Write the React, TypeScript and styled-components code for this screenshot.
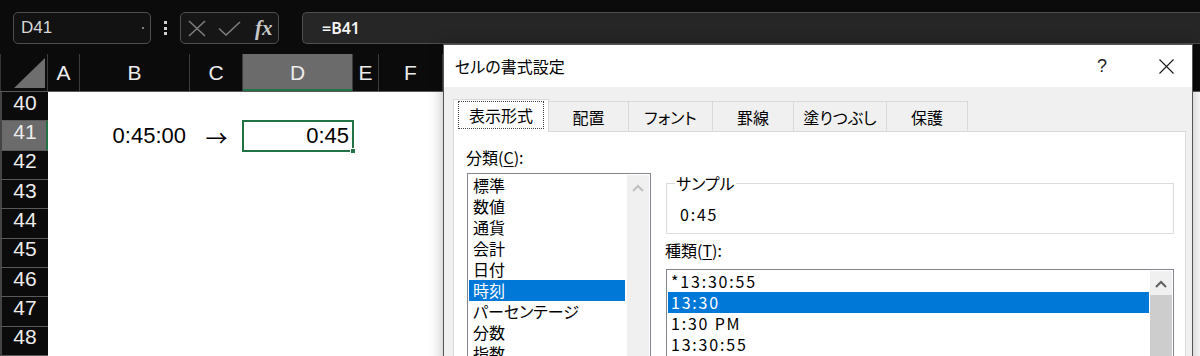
import React from "react";
import styled, { createGlobalStyle, css } from "styled-components";

const JP = `"Noto Sans CJK JP", "Noto Sans", sans-serif`;
const UI = `"Liberation Sans", Arial, sans-serif`;
const GREEN = "#217346";
const BLUE = "#0078d7";
const ROW_H = 29.33;

const GlobalStyle = createGlobalStyle`
  html, body { margin: 0; padding: 0; background: #0b0b0b; }
  * { box-sizing: border-box; }
`;

const Screen = styled.div`
  position: relative;
  width: 1200px;
  height: 356px;
  overflow: hidden;
  background: #0b0b0b;
  font-family: ${UI};
`;

/* ---------- formula bar ---------- */

const FormulaBar = styled.div`
  display: flex;
  align-items: center;
  height: 32px;
  margin-top: 12px;
  padding-left: 13px;
`;

const NameBox = styled.div`
  width: 138px;
  height: 32px;
  border: 1px solid #4e4e4e;
  border-radius: 5px;
  background: #121212;
  display: flex;
  align-items: center;
  justify-content: space-between;
  padding: 0 6px 0 7px;
  color: #d8d8d8;
  font-size: 17px;
`;

const NameDot = styled.span`
  width: 2px;
  height: 2px;
  border-radius: 1px;
  background: #a0a0a0;
`;

const Kebab = styled.div`
  width: 29px;
  display: flex;
  flex-direction: column;
  align-items: center;
  gap: 2.5px;

  span {
    width: 3px;
    height: 3px;
    background: #d0d0d0;
  }
`;

const FuncBox = styled.div`
  width: 99px;
  height: 32px;
  border: 1px solid #4e4e4e;
  border-radius: 5px;
  background: #161616;
  display: flex;
  align-items: center;
  padding-left: 7px;

  svg + svg {
    margin-left: 12px;
  }
`;

const Fx = styled.span`
  margin-left: 14px;
  font-family: "Liberation Serif", "Times New Roman", serif;
  font-style: italic;
  font-weight: bold;
  font-size: 21px;
  color: #c8c8c8;
  line-height: 1;
`;

const FormulaInput = styled.div`
  flex: 1;
  height: 32px;
  margin-left: 23px;
  background: #262626;
  border: 1px solid #4e4e4e;
  border-right: none;
  border-radius: 5px 0 0 5px;
  display: flex;
  align-items: center;
  padding-left: 19px;
  color: #f4f4f4;
  font-family: "Noto Sans", ${UI};
  font-weight: 600;
  font-size: 16px;
`;

/* ---------- sheet ---------- */

const Sheet = styled.div`
  margin-top: 10px;
`;

const ColHeaderRow = styled.div`
  display: flex;
  height: 38px;
  border-bottom: 1px solid #5a5a5a;
`;

const Corner = styled.div`
  width: 48px;
  display: flex;
  align-items: flex-end;
  justify-content: flex-end;
  padding: 0 2px 3px 0;
  border-left: 1px solid #333;
  border-right: 1px solid #3c3c3c;
`;

const ColHead = styled.div<{ $w: number; $active?: boolean }>`
  width: ${(p) => p.$w}px;
  flex: none;
  display: flex;
  align-items: center;
  justify-content: center;
  border-right: 1px solid #3c3c3c;
  color: #ececec;
  font-size: 21px;
  ${(p) =>
    p.$active &&
    css`
      background: #6b6b6b;
      box-shadow: inset 0 -2px ${GREEN};
    `}
`;

const SheetBody = styled.div`
  display: flex;
`;

const RowHeads = styled.div`
  width: 48px;
  display: flex;
  flex-direction: column;
`;

const RowHead = styled.div<{ $active?: boolean }>`
  height: ${ROW_H}px;
  display: flex;
  align-items: center;
  justify-content: center;
  padding-bottom: 7px;
  border-left: 2px solid #444;
  border-bottom: 1px solid #5a5a5a;
  color: #ececec;
  font-size: 21px;
  ${(p) =>
    p.$active &&
    css`
      background: #6b6b6b;
      box-shadow: inset -2px 0 ${GREEN};
    `}
`;

const CellGrid = styled.div`
  flex: 1;
  background: #fff;
  display: grid;
  grid-template-columns: 32px 110px 53px 110px 26px 64px 1fr;
  grid-auto-rows: ${ROW_H}px;
`;

const Cell = styled.div<{ $col: number; $row: number; $align?: string; $selected?: boolean }>`
  grid-column: ${(p) => p.$col};
  grid-row: ${(p) => p.$row};
  position: relative;
  display: flex;
  align-items: center;
  justify-content: ${(p) => p.$align || "flex-end"};
  padding: 0 4px;
  color: #000;
  font-size: 22px;
  ${(p) =>
    p.$selected &&
    css`
      outline: 2px solid ${GREEN};
      outline-offset: -1px;
    `}
`;

const Arrow = styled.span`
  font-family: ${JP};
  font-size: 22px;
`;

const FillHandle = styled.span`
  position: absolute;
  right: -3px;
  bottom: -3px;
  width: 6px;
  height: 6px;
  background: ${GREEN};
  border: 1px solid #fff;
`;

/* ---------- dialog ---------- */

const Dialog = styled.div`
  position: absolute;
  left: 443px;
  top: 44px;
  width: 750px;
  height: 330px;
  background: #f0f0f0;
  border: 1px solid #555;
  box-shadow: 0 0 14px rgba(0, 0, 0, 0.28);
  font-family: ${JP};
  font-feature-settings: "palt";
  color: #000;
`;

const TitleBar = styled.div`
  height: 42px;
  background: #fff;
  display: flex;
  align-items: center;
  padding-left: 11px;
  font-size: 16px;
`;

const TitleText = styled.span`
  flex: 1;
`;

const TitleButton = styled.div<{ $gap?: number }>`
  width: 46px;
  height: 42px;
  margin-right: ${(p) => p.$gap ?? 0}px;
  display: flex;
  align-items: center;
  justify-content: center;
  font-family: ${UI};
  font-size: 18px;
  color: #222;
`;

const DialogBody = styled.div`
  padding: 12px 6px 0 9px;
`;

const TabStrip = styled.div`
  position: relative;
  z-index: 1;
  display: flex;
  align-items: flex-end;
  height: 32px;
`;

const Tab = styled.div<{ $w: number; $active?: boolean }>`
  width: ${(p) => p.$w}px;
  height: 30px;
  margin-right: -1px;
  border: 1px solid #d9d9d9;
  border-bottom: none;
  background: #f0f0f0;
  display: flex;
  align-items: center;
  justify-content: center;
  font-size: 16px;
  ${(p) =>
    p.$active &&
    css`
      height: 33px;
      margin-bottom: -1px;
      background: #fff;
      align-items: flex-start;
    `}
`;

const FocusRing = styled.div`
  width: calc(100% - 8px);
  height: 28px;
  margin-top: 1px;
  border: 1px dotted #444;
  display: flex;
  align-items: center;
  justify-content: center;
`;

const Panel = styled.div`
  height: 240px;
  background: #fff;
  border: 1px solid #d9d9d9;
  display: flex;
  gap: 15px;
  padding: 15px 11px 0 13px;
`;

const LeftCol = styled.div`
  width: 184px;
  display: flex;
  flex-direction: column;
`;

const RightCol = styled.div`
  flex: 1;
  display: flex;
  flex-direction: column;
  padding-top: 28px;
`;

const FieldLabel = styled.div<{ $mt?: number; $mb?: number }>`
  font-size: 16px;
  line-height: 21px;
  margin-top: ${(p) => p.$mt ?? 0}px;
  margin-bottom: ${(p) => p.$mb ?? 5}px;
  margin-left: -1px;

  u {
    text-underline-offset: 2px;
  }
`;

const ListBox = styled.div<{ $h: number; $gap: number }>`
  height: ${(p) => p.$h}px;
  border: 1px solid #828790;
  background: #fff;
  padding: 1px;
  display: flex;
  gap: ${(p) => p.$gap}px;
`;

const Items = styled.div`
  flex: 1;
  display: flex;
  flex-direction: column;
`;

const Item = styled.div<{ $selected?: boolean; $num?: boolean; $pad: number }>`
  height: 21px;
  line-height: 21px;
  font-size: 16px;
  padding-left: ${(p) => p.$pad}px;
  white-space: nowrap;
  ${(p) => p.$num && css`letter-spacing: 1.8px;`}
  ${(p) =>
    p.$selected &&
    css`
      background: ${BLUE};
      color: #fff;
    `}
`;

const ScrollBar = styled.div`
  width: 22px;
  background: #f0f0f0;
  display: flex;
  flex-direction: column;
`;

const ScrollUp = styled.div`
  height: 24px;
  display: flex;
  align-items: center;
  justify-content: center;
  padding-top: 2px;
`;

const Thumb = styled.div`
  flex: 1;
  background: #cdcdcd;
`;

const SampleBox = styled.fieldset`
  margin: 0;
  min-width: 0;
  border: 1px solid #dcdcdc;
  padding: 13px 0 8px 8px;

  legend {
    padding: 0 1px;
    font-size: 16px;
    line-height: 16px;
  }
`;

const SampleValue = styled.div`
  padding-left: 5px;
  font-size: 16px;
  line-height: 21px;
  letter-spacing: 1.8px;
`;

const Chevron = ({ color }: { color: string }) => (
  <svg width="12" height="8" viewBox="0 0 12 8">
    <polyline points="1,7 6,2 11,7" fill="none" stroke={color} strokeWidth="2" />
  </svg>
);

// G and beyond sit under the dialog, so they carry no label
const columns = [
  { label: "A", w: 32 },
  { label: "B", w: 110 },
  { label: "C", w: 53 },
  { label: "D", w: 110, active: true },
  { label: "E", w: 26 },
  { label: "F", w: 64 },
  { label: "", w: 110 },
  { label: "", w: 110 },
];

const rows = [40, 41, 42, 43, 44, 45, 46, 47, 48];

const tabs = [
  { label: "表示形式", w: 96, active: true },
  { label: "配置", w: 81 },
  { label: "フォント", w: 85 },
  { label: "罫線", w: 82 },
  { label: "塗りつぶし", w: 94 },
  { label: "保護", w: 82 },
];

const categories = ["標準", "数値", "通貨", "会計", "日付", "時刻", "パーセンテージ", "分数", "指数"];
const types = ["*13:30:55", "13:30", "1:30 PM", "13:30:55"];

export default function App() {
  return (
    <Screen>
      <GlobalStyle />
      <FormulaBar>
        <NameBox>
          D41
          <NameDot />
        </NameBox>
        <Kebab>
          <span />
          <span />
          <span />
        </Kebab>
        <FuncBox>
          <svg width="18" height="17" viewBox="0 0 18 17">
            <path d="M1 1 L17 16 M17 1 L1 16" stroke="#7c7c7c" strokeWidth="1.6" fill="none" />
          </svg>
          <svg width="23" height="15" viewBox="0 0 23 15">
            <polyline points="1,7.5 8,14 22,1" stroke="#7c7c7c" strokeWidth="1.6" fill="none" />
          </svg>
          <Fx>fx</Fx>
        </FuncBox>
        <FormulaInput>=B41</FormulaInput>
      </FormulaBar>

      <Sheet>
        <ColHeaderRow>
          <Corner>
            <svg width="31" height="30" viewBox="0 0 31 30">
              <polygon points="0,30 31,30 31,0" fill="#6e6e6e" />
            </svg>
          </Corner>
          {columns.map((c, i) => (
            <ColHead key={i} $w={c.w} $active={c.active}>
              {c.label}
            </ColHead>
          ))}
        </ColHeaderRow>
        <SheetBody>
          <RowHeads>
            {rows.map((r) => (
              <RowHead key={r} $active={r === 41}>
                {r}
              </RowHead>
            ))}
          </RowHeads>
          <CellGrid>
            <Cell $col={2} $row={2}>0:45:00</Cell>
            <Cell $col={3} $row={2} $align="center">
              <Arrow>→</Arrow>
            </Cell>
            <Cell $col={4} $row={2} $selected>
              0:45
              <FillHandle />
            </Cell>
          </CellGrid>
        </SheetBody>
      </Sheet>

      <Dialog>
        <TitleBar>
          <TitleText>セルの書式設定</TitleText>
          <TitleButton $gap={18}>?</TitleButton>
          <TitleButton $gap={3}>
            <svg width="15" height="15" viewBox="0 0 15 15">
              <path d="M0.5 0.5 L14.5 14.5 M14.5 0.5 L0.5 14.5" stroke="#1a1a1a" strokeWidth="1.1" fill="none" />
            </svg>
          </TitleButton>
        </TitleBar>
        <DialogBody>
          <TabStrip>
            {tabs.map((t) =>
              t.active ? (
                <Tab key={t.label} $w={t.w} $active>
                  <FocusRing>{t.label}</FocusRing>
                </Tab>
              ) : (
                <Tab key={t.label} $w={t.w}>
                  {t.label}
                </Tab>
              )
            )}
          </TabStrip>
          <Panel>
            <LeftCol>
              <FieldLabel>
                分類(<u>C</u>):
              </FieldLabel>
              <ListBox $h={200} $gap={2}>
                <Items>
                  {categories.map((c) => (
                    <Item key={c} $pad={4} $selected={c === "時刻"}>
                      {c}
                    </Item>
                  ))}
                </Items>
                <ScrollBar>
                  <ScrollUp>
                    <Chevron color="#c0c0c0" />
                  </ScrollUp>
                </ScrollBar>
              </ListBox>
            </LeftCol>
            <RightCol>
              <SampleBox>
                <legend>サンプル</legend>
                <SampleValue>0:45</SampleValue>
              </SampleBox>
              <FieldLabel $mt={6} $mb={8}>
                種類(<u>T</u>):
              </FieldLabel>
              <ListBox $h={120} $gap={1}>
                <Items>
                  {types.map((t, i) => (
                    <Item key={t + i} $pad={3} $num $selected={i === 1}>
                      {t}
                    </Item>
                  ))}
                </Items>
                <ScrollBar>
                  <ScrollUp>
                    <Chevron color="#606060" />
                  </ScrollUp>
                  <Thumb />
                </ScrollBar>
              </ListBox>
            </RightCol>
          </Panel>
        </DialogBody>
      </Dialog>
    </Screen>
  );
}
